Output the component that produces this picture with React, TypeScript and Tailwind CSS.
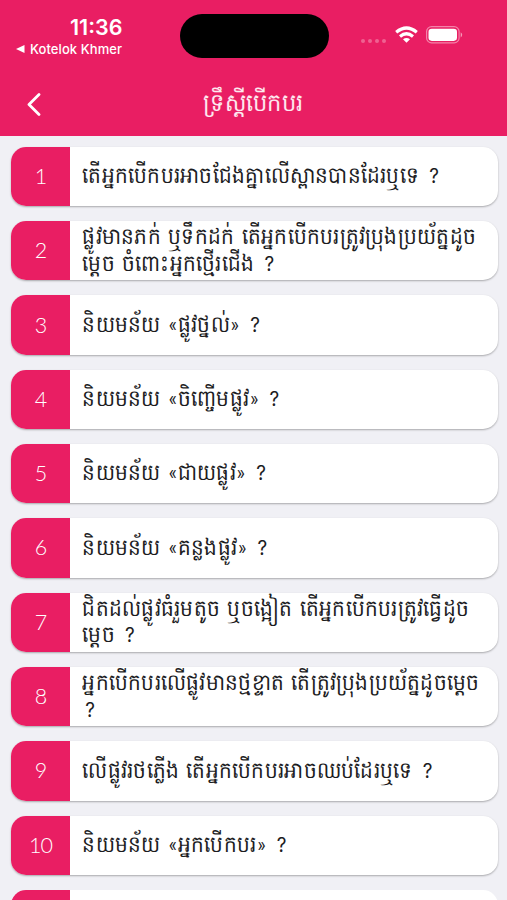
const questions: string[][] = [
  ['តើអ្នកបើកបរអាចជែងគ្នាលើស្ពានបានដែរឬទេ ?'],
  ['ផ្លូវមានភក់ ឬទឹកដក់ តើអ្នកបើកបរត្រូវប្រុងប្រយ័ត្នដូច', 'ម្ដេច ចំពោះអ្នកថ្មើរជើង ?'],
  ['និយមន័យ «ផ្លូវថ្នល់» ?'],
  ['និយមន័យ «ចិញ្ចើមផ្លូវ» ?'],
  ['និយមន័យ «ជាយផ្លូវ» ?'],
  ['និយមន័យ «គន្លងផ្លូវ» ?'],
  ['ជិតដល់ផ្លូវធំរួមតូច ឬចង្អៀត តើអ្នកបើកបរត្រូវធ្វើដូច', 'ម្ដេច ?'],
  ['អ្នកបើកបរលើផ្លូវមានថ្មខ្ទាត តើត្រូវប្រុងប្រយ័ត្នដូចម្ដេច', '?'],
  ['លើផ្លូវរថភ្លើង តើអ្នកបើកបរអាចឈប់ដែរឬទេ ?'],
  ['និយមន័យ «អ្នកបើកបរ» ?'],
];

function StatusBar() {
  return (
    <div className="flex h-[72px] font-['Inter',sans-serif] text-white">
      <div className="w-[180px] pt-[14px]">
        <div className="pl-[70px] text-[21.5px] leading-[26px] font-semibold">11:36</div>
        <div className="flex items-center gap-[5px] pl-4 text-[13px] leading-[18px] font-medium whitespace-nowrap">
          <svg width="9" height="8" viewBox="0 0 9 8"><path d="M0 4 8.5 0v8Z" fill="currentColor" /></svg>
          <span className="tracking-[0.08px]">Kotelok Khmer</span>
        </div>
      </div>
      <div className="mt-[14px] h-[44px] w-[149px] rounded-full bg-black" />
      <div className="flex pl-[32px]">
        <div className="mt-[39px] flex gap-[3px]">
          {[0, 1, 2, 3].map((dot) => <i key={dot} className="size-[4px] rounded-full bg-white/30" />)}
        </div>
        <svg className="mt-[26px] ml-[9px]" width="23" height="17" viewBox="0 0 23 17" fill="none" stroke="white" strokeWidth="3.2">
          <path d="M1.2 6.2Q11.5-2.2 21.8 6.2" />
          <path d="M5 10.4Q11.5 5.1 18 10.4" />
          <path d="M8 13.2Q11.5 10.6 15 13.2L11.5 16.8Z" fill="white" stroke="none" />
        </svg>
        <svg className="mt-[26px] ml-[8px]" width="38" height="18" viewBox="0 0 38 18">
          <rect x=".6" y=".6" width="32.5" height="16.3" rx="5" fill="none" stroke="white" strokeOpacity=".45" strokeWidth="1.2" />
          <rect x="2.5" y="2.7" width="28.5" height="12.2" rx="3.3" fill="white" />
          <path d="M34.7 6.2q3 2.6 0 5.2Z" fill="white" fillOpacity=".55" />
        </svg>
      </div>
    </div>
  );
}

function QuestionLine({ text }: { text: string }) {
  return (
    <p className="origin-left scale-y-115 text-[20px] leading-[26.5px] tracking-[0.27px] [word-spacing:2px] whitespace-nowrap text-[#1c1c1e]">
      {text.split(/([«»?])/).map((part, index) => {
        if (part === '?') {
          return <span key={index} className="ml-[3px] inline-block origin-bottom scale-y-90 font-['Inter',sans-serif] text-[19px] leading-none">?</span>;
        }
        if (part === '«' || part === '»') {
          return <span key={index} className="inline-block w-[10px] text-center text-[17px] leading-none">{part}</span>;
        }
        return part;
      })}
    </p>
  );
}

function QuestionCard({ number, lines }: { number: number; lines: string[] }) {
  return (
    <li className="flex h-[59.3px] shrink-0 overflow-hidden rounded-[15px] bg-white shadow-[0_1px_2px_rgba(0,0,0,0.3)]">
      <div className="flex w-[58.5px] shrink-0 items-center justify-center bg-[#e91e63] pb-px font-['Lato',sans-serif] text-[21.5px] font-light tracking-[-1px] text-white">
        {number}
      </div>
      <div className="flex flex-col justify-center pb-[2px] pl-[12.5px]">
        {lines.map((line) => <QuestionLine key={line} text={line} />)}
      </div>
    </li>
  );
}

export default function App() {
  return (
    <main className="flex h-[900px] w-[507px] flex-col overflow-hidden bg-[#f0f0f5] font-['Roboto','Khmer_OS',sans-serif]">
      <header className="h-[136.4px] shrink-0 bg-[#e91e63]">
        <StatusBar />
        <div className="grid h-[63px] grid-cols-[100px_1fr_100px] items-center text-white">
          <svg className="ml-[26px]" width="16" height="24" viewBox="0 0 16 24" fill="none" stroke="currentColor" strokeWidth="2.8" strokeLinecap="round" strokeLinejoin="round">
            <path d="M13 2.5 3 12.5l10 10" />
          </svg>
          <h1 className="scale-y-110 pb-[3px] text-center text-[22.5px] leading-[30px] tracking-[0.4px] text-white/90">ទ្រឹស្ដីបើកបរ</h1>
        </div>
      </header>
      <ul className="flex min-h-0 flex-1 flex-col gap-[15px] pt-[10.5px] pr-[9.5px] pl-[11.3px]">
        {questions.map((lines, index) => <QuestionCard key={index} number={index + 1} lines={lines} />)}
        <li className="flex h-[59.3px] shrink-0 overflow-hidden rounded-[15px] bg-white">
          <div className="w-[58.5px] bg-[#e91e63]" />
        </li>
      </ul>
    </main>
  );
}
